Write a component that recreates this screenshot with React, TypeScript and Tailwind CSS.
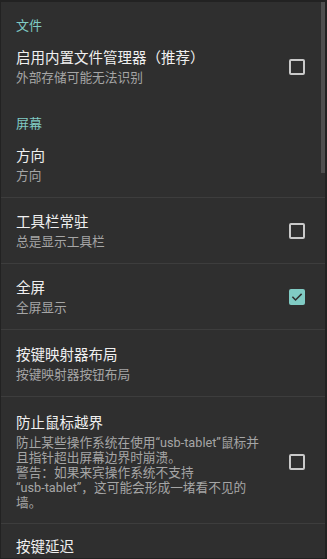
import React from 'react';

type Pref = {
  title: string;
  summary?: React.ReactNode;
  checkbox?: 'on' | 'off';
};

const font = { fontFamily: '"Roboto", "Noto Sans CJK SC", sans-serif' };

const Checkbox: React.FC<{ checked: boolean }> = ({ checked }) =>
  checked ? (
    <div className="w-4 h-4 rounded-[2px] bg-[#80cbc4] flex items-center justify-center shrink-0">
      <svg viewBox="0 0 24 24" className="w-[14px] h-[14px]" fill="none">
        <path d="M5 12.5l4.5 4.5L19 7.5" stroke="#2f2f2f" strokeWidth={2.6} strokeLinecap="square" />
      </svg>
    </div>
  ) : (
    <div className="w-4 h-4 rounded-[2px] border-2 border-[#c9c9c9] shrink-0" />
  );

const Header: React.FC<{ label: string; top: string }> = ({ label, top }) => (
  <div className={`${top} pl-[15px] text-[13px] leading-4 text-[#80cbc4]`}>{label}</div>
);

const Row: React.FC<Pref & { className: string }> = ({ title, summary, checkbox, className }) => (
  <div className={`flex items-center pl-[15px] pr-[20px] ${className}`}>
    <div className="flex-1 min-w-0">
      <div className="text-[14.5px] leading-5 text-[#f0f0f0] whitespace-nowrap">{title}</div>
      {summary && <div className="text-[12.7px] leading-[15px] text-[#a6a6a6] mt-[1px]">{summary}</div>}
    </div>
    {checkbox && <Checkbox checked={checkbox === 'on'} />}
  </div>
);

const Divider = () => <div className="h-px bg-[#3d3d3d]" />;

export default function App() {
  return (
    <div
      className="relative w-[327px] h-[559px] overflow-hidden bg-[#2f2f2f] border-t-2 border-l border-b border-r-2 border-[#222222]"
      style={font}
    >
      <Header label="文件" top="pt-4" />
      <Row
        className="pt-[15px] pb-[15px]"
        title="启用内置文件管理器（推荐）"
        summary="外部存储可能无法识别"
        checkbox="off"
      />
      <Header label="屏幕" top="pt-4" />
      <Row className="pt-[15px] pb-[14px]" title="方向" summary="方向" />
      <Divider />
      <Row className="pt-[15px] pb-[14px]" title="工具栏常驻" summary="总是显示工具栏" checkbox="off" />
      <Divider />
      <Row className="pt-[15px] pb-[14px]" title="全屏" summary="全屏显示" checkbox="on" />
      <Divider />
      <Row className="pt-4 pb-[14px]" title="按键映射器布局" summary="按键映射器按钮布局" />
      <Divider />
      <Row
        className="pt-[17px] pb-[13px]"
        title="防止鼠标越界"
        checkbox="off"
        summary={
          <>
            防止某些操作系统在使用“usb-tablet”鼠标并
            <br />
            且指针超出屏幕边界时崩溃。
            <br />
            警告：如果来宾操作系统不支持
            <br />
            “usb-tablet”，这可能会形成一堵看不见的
            <br />
            墙。
          </>
        }
      />
      <Divider />
      <Row className="pt-[14px] pb-4" title="按键延迟" />

      {/* scrollbar */}
      <div className="absolute top-0 right-0 w-[4px] h-[171px] bg-[#4f4f4f]" />
    </div>
  );
}
